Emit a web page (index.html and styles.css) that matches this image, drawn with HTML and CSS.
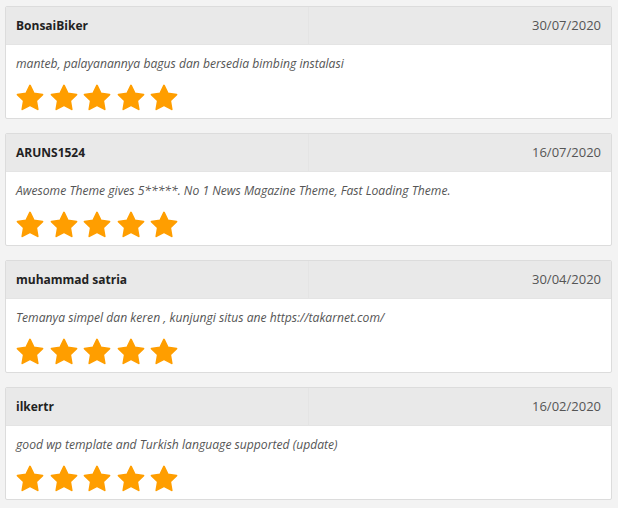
FILE: index.html
```html
<!DOCTYPE html>
<html>
<head>
  <title>Reviews</title>
  <link rel="stylesheet" href="styles.css">
</head>
<body>
  <svg width="0" height="0" class="defs">
    <defs>
      <polygon id="star" points="12,2 15.09,8.26 22,9.27 17,14.14 18.18,21.02 12,17.77 5.82,21.02 7,14.14 2,9.27 8.91,8.26"/>
    </defs>
  </svg>

  <div class="reviews">
    <div class="review">
      <div class="review-head">
        <div class="author">BonsaiBiker</div>
        <div class="date">30/07/2020</div>
      </div>
      <div class="review-body">
        <p class="text">manteb, palayanannya bagus dan bersedia bimbing instalasi</p>
        <div class="stars">
          <svg viewBox="0 0 24 24"><use href="#star"/></svg>
          <svg viewBox="0 0 24 24"><use href="#star"/></svg>
          <svg viewBox="0 0 24 24"><use href="#star"/></svg>
          <svg viewBox="0 0 24 24"><use href="#star"/></svg>
          <svg viewBox="0 0 24 24"><use href="#star"/></svg>
        </div>
      </div>
    </div>

    <div class="review">
      <div class="review-head">
        <div class="author">ARUNS1524</div>
        <div class="date">16/07/2020</div>
      </div>
      <div class="review-body">
        <p class="text">Awesome Theme gives 5*****. No 1 News Magazine Theme, Fast Loading Theme.</p>
        <div class="stars">
          <svg viewBox="0 0 24 24"><use href="#star"/></svg>
          <svg viewBox="0 0 24 24"><use href="#star"/></svg>
          <svg viewBox="0 0 24 24"><use href="#star"/></svg>
          <svg viewBox="0 0 24 24"><use href="#star"/></svg>
          <svg viewBox="0 0 24 24"><use href="#star"/></svg>
        </div>
      </div>
    </div>

    <div class="review">
      <div class="review-head">
        <div class="author">muhammad satria</div>
        <div class="date">30/04/2020</div>
      </div>
      <div class="review-body">
        <p class="text">Temanya simpel dan keren , kunjungi situs ane https://takarnet.com/</p>
        <div class="stars">
          <svg viewBox="0 0 24 24"><use href="#star"/></svg>
          <svg viewBox="0 0 24 24"><use href="#star"/></svg>
          <svg viewBox="0 0 24 24"><use href="#star"/></svg>
          <svg viewBox="0 0 24 24"><use href="#star"/></svg>
          <svg viewBox="0 0 24 24"><use href="#star"/></svg>
        </div>
      </div>
    </div>

    <div class="review">
      <div class="review-head">
        <div class="author">ilkertr</div>
        <div class="date">16/02/2020</div>
      </div>
      <div class="review-body">
        <p class="text">good wp template and Turkish language supported (update)</p>
        <div class="stars">
          <svg viewBox="0 0 24 24"><use href="#star"/></svg>
          <svg viewBox="0 0 24 24"><use href="#star"/></svg>
          <svg viewBox="0 0 24 24"><use href="#star"/></svg>
          <svg viewBox="0 0 24 24"><use href="#star"/></svg>
          <svg viewBox="0 0 24 24"><use href="#star"/></svg>
        </div>
      </div>
    </div>
  </div>
</body>
</html>
```

FILE: styles.css
```css
body {
  margin: 0;
  padding: 6px 6px 0 5px;
  background-color: #f3f3f3;
  font-family: "Open Sans", Arial, sans-serif;
  font-size: 13px;
  color: #333;
}

.defs {
  position: absolute;
}

.reviews {
  display: flex;
  flex-direction: column;
  gap: 14px;
}

.review {
  background: #fff;
  border: 1px solid #dcdcdc;
  border-radius: 2px;
  height: 111px;
  overflow: hidden;
}

.review-head {
  display: flex;
  height: 37px;
  background: #e9e9e9;
  border-bottom: 1px solid #e4e4e4;
}

.author {
  flex: 0 0 302px;
  box-sizing: border-box;
  padding-left: 10px;
  line-height: 37px;
  font-size: 12px;
  font-weight: bold;
  color: #222;
}

.date {
  flex: 1;
  padding-right: 10px;
  line-height: 37px;
  text-align: right;
  color: #555;
  border-left: 1px solid #e4e4e4;
}

.review-body {
  padding: 9px 10px 0;
}

.text {
  margin: 0;
  line-height: 20px;
  font-size: 12.15px;
  font-style: italic;
  color: #555;
}

.stars {
  display: flex;
  gap: 3.5px;
  margin-top: 9px;
}

.stars svg {
  width: 30px;
  height: 30px;
  margin-left: -1px;
  fill: #ff9e00;
  stroke: #ff9e00;
  stroke-width: 1.4;
  stroke-linejoin: round;
}

.stars svg + svg {
  margin-left: 0;
}
```
